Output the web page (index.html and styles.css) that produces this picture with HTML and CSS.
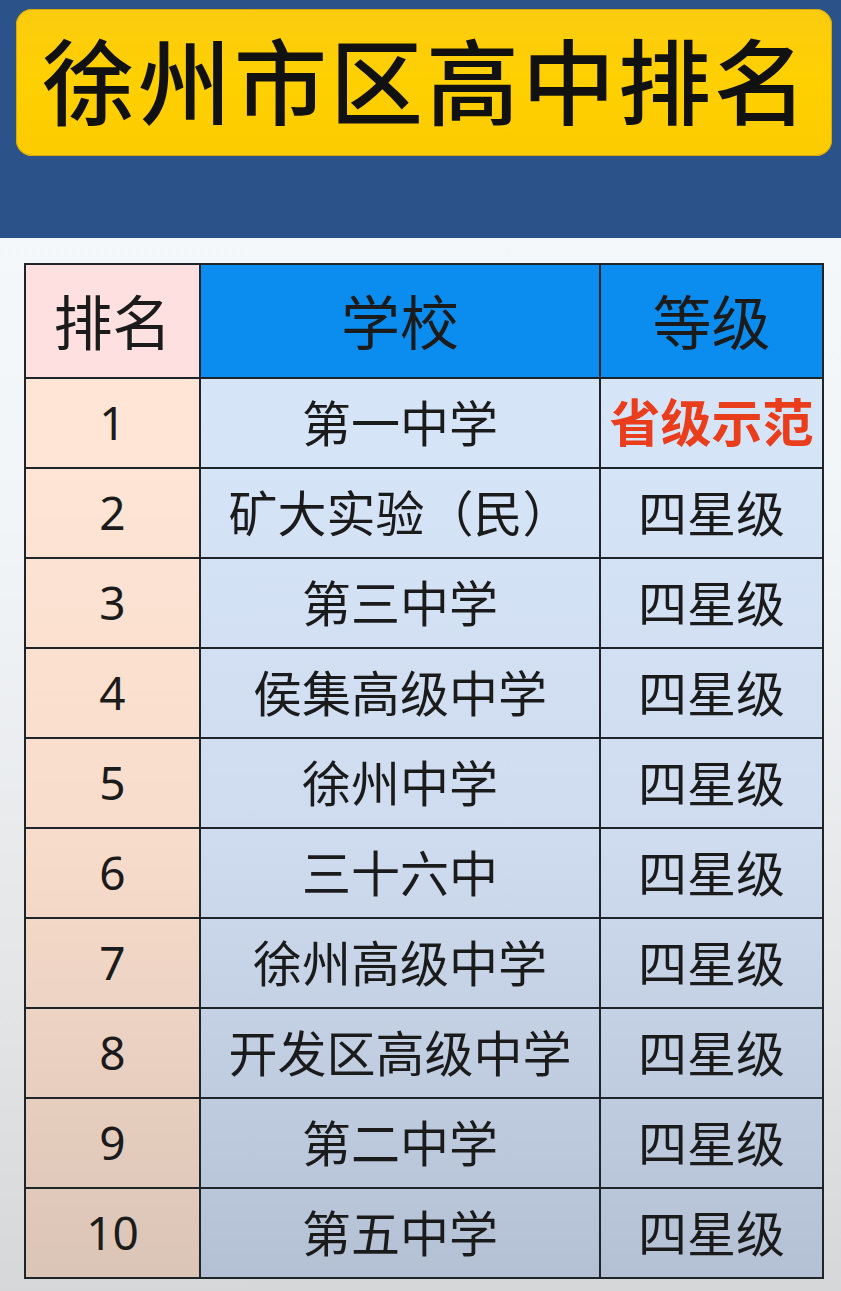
FILE: index.html
```html
<!DOCTYPE html>
<html lang="zh">
<head>
<meta charset="utf-8">
<link rel="stylesheet" href="styles.css">
</head>
<body>
<header class="band">
  <div class="banner"><h1 class="title">徐州市区高中排名</h1></div>
</header>
<main class="sheet">
  <table class="rank">
    <thead>
      <tr><th class="c1">排名</th><th class="c2">学校</th><th class="c3">等级</th></tr>
    </thead>
    <tbody>
      <tr><td class="c1">1</td><td class="c2">第一中学</td><td class="c3 red">省级示范</td></tr>
      <tr><td class="c1">2</td><td class="c2">矿大实验（民）</td><td class="c3">四星级</td></tr>
      <tr><td class="c1">3</td><td class="c2">第三中学</td><td class="c3">四星级</td></tr>
      <tr><td class="c1">4</td><td class="c2">侯集高级中学</td><td class="c3">四星级</td></tr>
      <tr><td class="c1">5</td><td class="c2">徐州中学</td><td class="c3">四星级</td></tr>
      <tr><td class="c1">6</td><td class="c2">三十六中</td><td class="c3">四星级</td></tr>
      <tr><td class="c1">7</td><td class="c2">徐州高级中学</td><td class="c3">四星级</td></tr>
      <tr><td class="c1">8</td><td class="c2">开发区高级中学</td><td class="c3">四星级</td></tr>
      <tr><td class="c1">9</td><td class="c2">第二中学</td><td class="c3">四星级</td></tr>
      <tr><td class="c1">10</td><td class="c2">第五中学</td><td class="c3">四星级</td></tr>
    </tbody>
  </table>
</main>
</body>
</html>
```
FILE: styles.css
```css
html, body { margin: 0; padding: 0; }
body {
  width: 841px;
  height: 1291px;
  overflow: hidden;
  font-family: "Noto Sans CJK SC", "Noto Sans", sans-serif;
  background: linear-gradient(to bottom, #f7fafc 0%, #f2f5f7 40%, #e4e6e8 75%, #d6d7d8 100%);
}
.band {
  height: 238px;
  box-sizing: border-box;
  padding: 9px 9px 0 16px;
  background: #2c528a;
}
.banner {
  height: 147px;
  box-sizing: border-box;
  padding-bottom: 10px;
  border-radius: 16px;
  background: linear-gradient(to bottom, #fbcc10 0%, #ffd000 50%, #fccb00 100%);
  box-shadow: 0 0 0 1px #d9a900 inset;
  display: flex;
  align-items: center;
  justify-content: center;
}
.title {
  margin: 0;
  font-size: 93px;
  font-weight: 500;
  color: #111;
  letter-spacing: 3px;
  line-height: 1;
  padding-left: 4px;
}
.sheet {
  padding: 25px 0 0 24px;
}
.rank {
  border-collapse: collapse;
  width: 800px;
  table-layout: fixed;
}
.rank th, .rank td {
  border: 2px solid #1f2429;
  text-align: center;
  padding: 0;
  color: #1b1b1b;
  font-weight: 400;
}
.rank th {
  height: 108px;
  padding-bottom: 4px;
  font-size: 59px;
}
.rank td {
  height: 82px;
  padding-bottom: 6px;
  font-size: 49px;
}
.rank th.c1 { width: 173px; background: #fde0df; }
.rank th.c2 { width: 398px; background: #0b8def; }
.rank th.c3 { background: #0b8def; }
.rank td.c1 {
  font-family: "Noto Sans", "Open Sans", sans-serif;
  font-size: 46px;
  height: 86px;
  padding-bottom: 2px;
  background: linear-gradient(to bottom, #fee6d6 0%, #fee5d5 35%, #f8dccb 65%, #dac4b6 100%) fixed;
}
.rank td.c2, .rank td.c3 {
  background: linear-gradient(to bottom, #d7e5f8 0%, #d6e4f7 35%, #cfdcef 65%, #b3bfd3 100%) fixed;
}
.rank td.red {
  color: #ea3d1c;
  font-weight: 700;
  font-size: 51px;
}
```
